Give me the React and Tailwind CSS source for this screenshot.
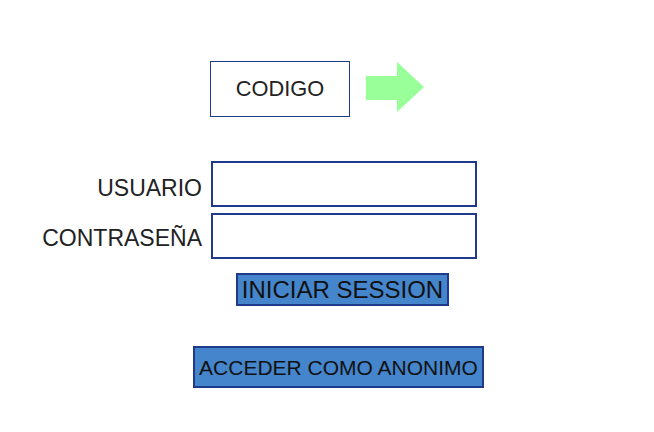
export default function App() {
  return (
    <div className="w-[654px] h-[432px] bg-white font-['Liberation_Sans',Arial,sans-serif] text-[#222]">
      <div className="flex items-start pt-[61px] pl-[210px]">
        <div className="w-[140px] h-[56px] border border-[#1f3a8a] flex items-center justify-center text-[21.8px] leading-none">
          CODIGO
        </div>
        <svg className="ml-[16px] mt-[1px]" width="58" height="50" viewBox="0 0 58 50">
          <polygon points="0,14 31,14 31,0 58,25 31,50 31,38 0,38" fill="#99ff99" />
        </svg>
      </div>

      <div className="mt-[44px] flex flex-col gap-[6px]">
        <div className="flex items-center">
          <div className="w-[202px] text-right text-[23px] leading-none pt-[8px]">USUARIO</div>
          <input className="ml-[9px] w-[266px] h-[46px] border-2 border-[#1f3a8a] outline-none bg-white" />
        </div>
        <div className="flex items-center">
          <div className="w-[202px] text-right text-[23px] leading-none pt-[4px]">CONTRASEÑA</div>
          <input type="password" className="ml-[9px] w-[266px] h-[46px] border-2 border-[#1f3a8a] outline-none bg-white" />
        </div>
      </div>

      <div className="ml-[236px] mt-[14px] w-[213px] h-[33px] border-2 border-[#1f3a8a] bg-[#4485cc] flex items-center justify-center text-[24px] leading-none text-[#111]">
        INICIAR SESSION
      </div>

      <div className="ml-[193px] mt-[40px] w-[291px] h-[42px] border-2 border-[#1f3a8a] bg-[#4485cc] flex items-center justify-center text-[21px] leading-none text-[#111]">
        ACCEDER COMO ANONIMO
      </div>
    </div>
  );
}
